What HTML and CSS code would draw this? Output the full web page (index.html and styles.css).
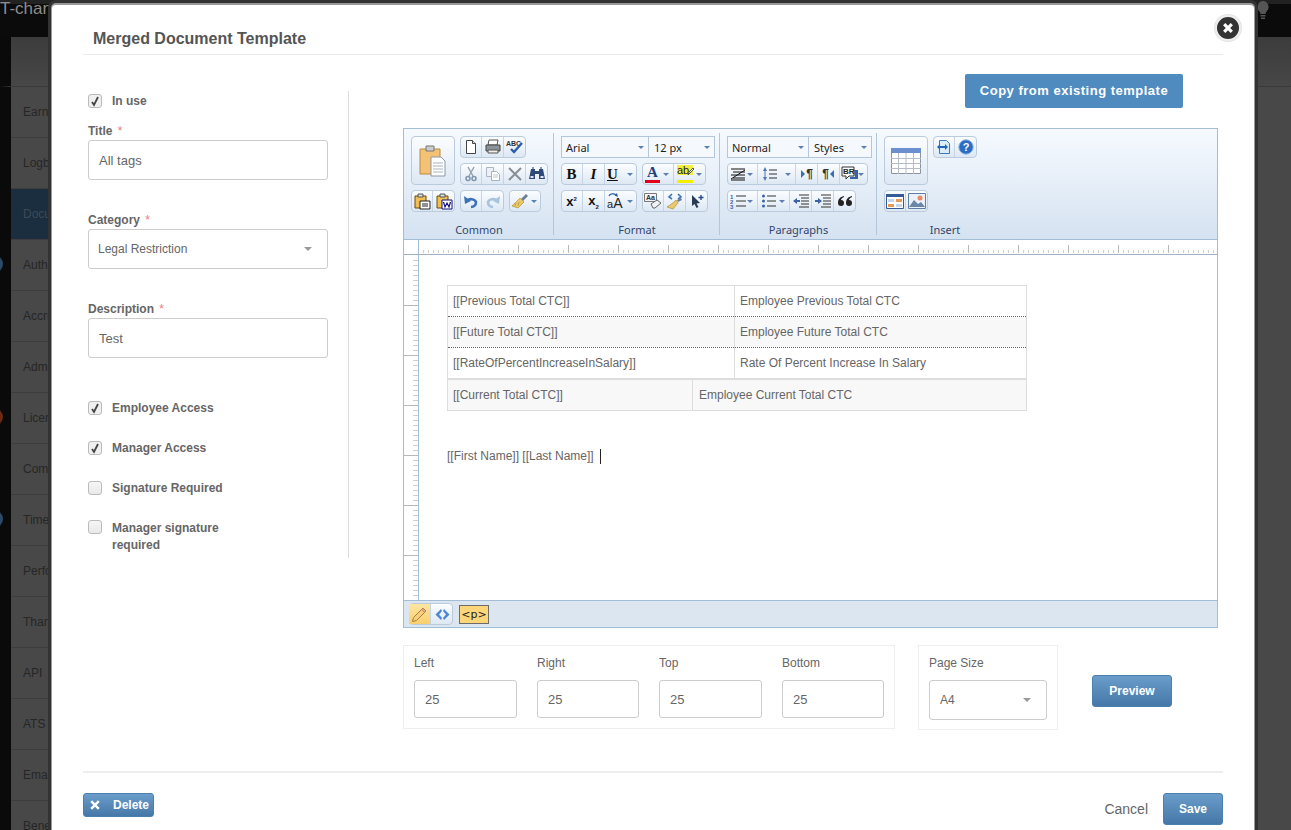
FILE: index.html
```html
<!DOCTYPE html>
<html lang="en">
<head>
<meta charset="utf-8">
<title>Merged Document Template</title>
<link rel="stylesheet" href="styles.css">
</head>
<body>
<div class="page">
  <header class="topbar">
    <span class="brand">T-change</span>
    <svg class="bulb" width="16" height="20" viewBox="0 0 16 20"><path d="M8 1a6 6 0 0 0-4 10c1 1 1.500 2 1.500 3h5c0-1 .5-2 1.500-3A6 6 0 0 0 8 1z" fill="#555"/><path d="M5.500 15h5v1.500h-5zM6 17.500h4V19H6z" fill="#555"/></svg>
  </header>
  <div class="subbar"></div>
  <nav class="sidenav">
    <div class="navitem">Earnings</div>
    <div class="navitem">Logbook</div>
    <div class="navitem active">Documents</div>
    <div class="navitem"><i class="dot blue"></i>Authorization</div>
    <div class="navitem">Accruals</div>
    <div class="navitem">Admin</div>
    <div class="navitem"><i class="dot red"></i>License</div>
    <div class="navitem">Company</div>
    <div class="navitem"><i class="dot blue"></i>Timesheet</div>
    <div class="navitem">Performance</div>
    <div class="navitem">Thanks</div>
    <div class="navitem">API</div>
    <div class="navitem">ATS</div>
    <div class="navitem">Email</div>
    <div class="navitem">Benefits</div>
  </nav>
</div>

<div class="modal">
  <div class="modal-head"><h1 class="modal-title">Merged Document Template</h1></div>
  <button class="close" aria-label="Close"><svg width="12" height="12" viewBox="0 0 12 12"><path d="M2.200 2.200l7.600 7.600M9.800 2.200l-7.600 7.600" stroke="#fff" stroke-width="3.200" stroke-linecap="butt"/></svg></button>

  <div class="modal-body">
    <aside class="left">
      <label class="check"><span class="box on"><svg width="10" height="11" viewBox="0 0 10 11"><path d="M2 6l2 3 4-8" fill="none" stroke="#444" stroke-width="1.800"/></svg></span>In use</label>

      <div class="field first"><div class="flabel">Title <b class="req">*</b></div><div class="input">All tags</div></div>
      <div class="field"><div class="flabel">Category <b class="req">*</b></div><div class="input select small">Legal Restriction<i class="caret"></i></div></div>
      <div class="field"><div class="flabel">Description <b class="req">*</b></div><div class="input">Test</div></div>

      <div class="checks">
        <label class="check"><span class="box on"><svg width="10" height="11" viewBox="0 0 10 11"><path d="M2 6l2 3 4-8" fill="none" stroke="#444" stroke-width="1.800"/></svg></span>Employee Access</label>
        <label class="check"><span class="box on"><svg width="10" height="11" viewBox="0 0 10 11"><path d="M2 6l2 3 4-8" fill="none" stroke="#444" stroke-width="1.800"/></svg></span>Manager Access</label>
        <label class="check"><span class="box"></span>Signature Required</label>
        <label class="check wrap"><span class="box"></span><span>Manager signature<br>required</span></label>
      </div>
    </aside>

    <section class="right">
      <div class="copyrow"><button class="copybtn">Copy from existing template</button></div>

      <div class="editor">
        <div class="toolbar">
          <div class="ts ts-common">
            <div class="tgrid">
              <span class="tb big"><svg width="32" height="34" viewBox="0 0 32 34"><path d="M3 5h20v25H3z" fill="#f3c274" stroke="#b98a45"/><path d="M9 2h8v5H9z" fill="#ccc" stroke="#777"/><path d="M14 13h10l4 4v15H14z" fill="#fff" stroke="#8b97a5"/><path d="M16 19h10M16 22h10M16 25h10M16 28h10" stroke="#aab4c0"/></svg></span>
              <div class="tstack">
                <div class="tg">
                  <span class="tb"><svg width="16" height="16" viewBox="0 0 16 16"><path d="M3.500 1.500h6l3 3v10h-9z" fill="#fff" stroke="#444"/><path d="M9.500 1.500v3h3" fill="#ddd" stroke="#444"/></svg></span>
                  <span class="tb"><svg width="18" height="16" viewBox="0 0 18 16"><path d="M5 1h9l-1 5H4z" fill="#fff" stroke="#555"/><path d="M2 6h14v6H2z" fill="#8d939a" stroke="#444"/><path d="M4 11h10v3H4z" fill="#eee" stroke="#555"/></svg></span>
                  <span class="tb"><svg width="18" height="16" viewBox="0 0 18 16"><text x="0" y="7" class="svgtiny">ABC</text><path d="M5 10l3 3 8-9" fill="none" stroke="#2a5fa8" stroke-width="2.400"/></svg></span>
                </div>
                <div class="tg">
                  <span class="tb"><svg width="16" height="16" viewBox="0 0 16 16"><path d="M5 1l5 9M11 1L6 10" stroke="#9aa3ad" stroke-width="1.500"/><circle cx="5" cy="12.500" r="2" fill="none" stroke="#7e93ad" stroke-width="1.500"/><circle cx="11" cy="12.500" r="2" fill="none" stroke="#7e93ad" stroke-width="1.500"/></svg></span>
                  <span class="tb"><svg width="16" height="16" viewBox="0 0 16 16"><path d="M1.500 1.500h7v9h-7z" fill="#eef2f7" stroke="#aab6c4"/><path d="M6.500 5.500h5l3 3v6h-8z" fill="#fff" stroke="#9fb2c8"/><path d="M8 9h5M8 11h5" stroke="#b9c7d8"/></svg></span>
                  <span class="tb"><svg width="16" height="16" viewBox="0 0 16 16"><path d="M2 2l12 12M14 2L2 14" stroke="#8a8f95" stroke-width="2"/></svg></span>
                  <span class="tb"><svg width="18" height="16" viewBox="0 0 18 16"><path d="M3 3h4v2h4V3h4l2 10h-6V8H7v5H1z" fill="#2f4a78"/><path d="M4 1h2v2H4zM12 1h2v2h-2z" fill="#7c9ac4"/><path d="M2.500 10h3v2h-3zM12.500 10h3v2h-3z" fill="#dfe8f4"/></svg></span>
                </div>
              </div>
              <div class="tg">
                <span class="tb"><svg width="18" height="17" viewBox="0 0 18 17"><path d="M2 3h11v12H2z" fill="#f0c052" stroke="#6b4a12"/><path d="M5 1h5v3H5z" fill="#ddd" stroke="#555"/><path d="M7 8h10v8H7z" fill="#fff" stroke="#222"/><path d="M9 11h6M9 13h6" stroke="#222"/></svg></span>
                <span class="tb"><svg width="18" height="17" viewBox="0 0 18 17"><path d="M2 3h11v12H2z" fill="#f0c052" stroke="#6b4a12"/><path d="M5 1h5v3H5z" fill="#ddd" stroke="#555"/><path d="M7 7h10v9H7z" fill="#fff" stroke="#12127a"/><path d="M8.500 9l1.500 5 2-4 2 4 1.500-5" fill="none" stroke="#12127a" stroke-width="1.200"/></svg></span>
              </div>
              <div class="trow">
                <div class="tg">
                  <span class="tb"><svg width="16" height="16" viewBox="0 0 16 16"><path d="M4 8a5 4 0 0 1 9 1c0 3-2 5-5 5" fill="none" stroke="#3e72b8" stroke-width="2.600"/><path d="M1 3l1 8 6-3z" fill="#3e72b8"/></svg></span>
                  <span class="tb"><svg width="16" height="16" viewBox="0 0 16 16"><path d="M12 8a5 4 0 0 0-9 1c0 3 2 5 5 5" fill="none" stroke="#a9c3df" stroke-width="2.600"/><path d="M15 3l-1 8-6-3z" fill="#a9c3df"/></svg></span>
                </div>
                <div class="tg">
                  <span class="tb wa"><svg width="18" height="16" viewBox="0 0 18 16"><path d="M10 6l5-5 2 2-5 5z" fill="#6a7e98"/><path d="M9 5l4 4-6 6-6-2c2-2 5-5 8-8z" fill="#ecc968" stroke="#a5852f" stroke-width=".6"/><path d="M5 10l-1 3M8 9l-1 4" stroke="#a5852f" stroke-width=".6"/></svg><i class="ar"></i></span>
                </div>
              </div>
            </div>
            <div class="tlabel">Common</div>
          </div>

          <div class="ts ts-format">
            <div class="tsels"><span class="tsel w88">Arial<i class="ar"></i></span><span class="tsel w66">12 px<i class="ar"></i></span></div>
            <div class="trow">
              <div class="tg">
                <span class="tb"><span class="fmt serif b">B</span></span>
                <span class="tb"><span class="fmt serif i">I</span></span>
                <span class="tb wa33"><span class="fmt serif u">U</span><i class="ar"></i></span>
              </div>
              <div class="tg">
                <span class="tb wa32"><span class="colA">A</span><i class="ar"></i></span>
                <span class="tb wa32"><span class="colAb">ab</span><svg class="pen" width="8" height="9" viewBox="0 0 8 9"><path d="M1 8l1-3 4-4 1 1-4 4z" fill="#fff" stroke="#555"/></svg><i class="ar"></i></span>
              </div>
            </div>
            <div class="trow">
              <div class="tg">
                <span class="tb"><span class="fmt sm">x<sup>2</sup></span></span>
                <span class="tb"><span class="fmt sm">x<sub>2</sub></span></span>
                <span class="tb wa33"><svg class="casearc" width="12" height="5" viewBox="0 0 12 5"><path d="M1 4a4 3 0 0 1 7-1" fill="none" stroke="#2a5fa8" stroke-width="1.200"/><path d="M10 5L6.500 3.500 9 1z" fill="#2a5fa8"/></svg><span class="caseA">a<b>A</b></span><i class="ar"></i></span>
              </div>
              <div class="tg">
                <span class="tb"><svg width="18" height="17" viewBox="0 0 18 17"><text x="2" y="7" class="svgtiny">Aa</text><path d="M.5 .5h12v8H.5z" fill="none" stroke="#777"/><path d="M7 11l6-4 4 3-6 5H9z" fill="#f2f2f2" stroke="#666"/></svg></span>
                <span class="tb"><svg width="18" height="17" viewBox="0 0 18 17"><path d="M6 1L3 4l3 2M12 1l3 3-3 2" fill="none" stroke="#3e72b8" stroke-width="1.600"/><path d="M11 7l4-2 1 2-4 2z" fill="#6a7e98"/><path d="M10 7l2 3-5 6-6-2c3-2 6-4 9-7z" fill="#ecc968" stroke="#a5852f" stroke-width=".6"/></svg></span>
                <span class="tb"><svg width="16" height="16" viewBox="0 0 16 16"><path d="M3 2l8 8-3.500.5L9.500 14l-2 1L5.500 11 3 13z" fill="#2a3c55"/><path d="M12 2v5M9.500 4.500h5" stroke="#2a4c88" stroke-width="1.400"/></svg></span>
              </div>
            </div>
            <div class="tlabel">Format</div>
          </div>

          <div class="ts ts-para">
            <div class="tsels"><span class="tsel w82">Normal<i class="ar"></i></span><span class="tsel w63">Styles<i class="ar"></i></span></div>
            <div class="trow">
              <div class="tg">
                <span class="tb wa31"><svg width="16" height="14" viewBox="0 0 16 14"><path d="M1 2h14M3 5h12M1 8h14M3 11h12M1 13h14" stroke="#111" stroke-width="1.200"/><path d="M1 12L15 3" stroke="#111"/></svg><i class="ar"></i></span>
                <span class="tb wa38"><svg width="16" height="16" viewBox="0 0 16 16"><path d="M3 1L1 5h4zM3 15L1 11h4zM2.500 5h1v6h-1z" fill="#4a78b8"/><path d="M7 4h8M7 8h8M7 12h8" stroke="#333"/></svg><i class="ar"></i></span>
                <span class="tb"><span class="pil"><i class="tri r"></i>¶</span></span>
                <span class="tb"><span class="pil">¶<i class="tri l"></i></span></span>
                <span class="tb wa27"><svg width="18" height="16" viewBox="0 0 18 16"><path d="M1 1h12v9H8l-3 3v-3H1z" fill="#fff" stroke="#333"/><path d="M13 4h4v9H9v-2h5z" fill="#3a62a8"/><text x="2" y="8" class="svgbr">BR</text></svg><i class="ar"></i></span>
              </div>
            </div>
            <div class="trow">
              <div class="tg">
                <span class="tb wa31"><svg width="16" height="16" viewBox="0 0 16 16"><text x="0" y="5.500" class="svgnum">1</text><text x="0" y="10.500" class="svgnum">2</text><text x="0" y="15.500" class="svgnum">3</text><path d="M6 3h10M6 8h10M6 13h10" stroke="#333"/></svg><i class="ar"></i></span>
                <span class="tb wa32b"><svg width="16" height="16" viewBox="0 0 16 16"><circle cx="2.500" cy="3" r="1.500" fill="#3a62a8"/><circle cx="2.500" cy="8" r="1.500" fill="#3a62a8"/><circle cx="2.500" cy="13" r="1.500" fill="#3a62a8"/><path d="M6 3h9M6 8h9M6 13h9" stroke="#333"/></svg><i class="ar"></i></span>
                <span class="tb"><svg width="16" height="14" viewBox="0 0 16 14"><path d="M6 1h10M8 4h8M8 7h8M8 10h8M6 13h10" stroke="#333"/><path d="M0 7l4-3v2h3v2H4v2z" fill="#3a62a8"/></svg></span>
                <span class="tb"><svg width="16" height="14" viewBox="0 0 16 14"><path d="M6 1h10M8 4h8M8 7h8M8 10h8M6 13h10" stroke="#333"/><path d="M7 7L3 4v2H0v2h3v2z" fill="#3a62a8"/></svg></span>
                <span class="tb"><svg width="16" height="12" viewBox="0 0 16 12"><path d="M7 1C3 2 1 4 1 8a3 3 0 1 0 3-3c0-1 1-2 3-3zM15 1c-4 1-6 3-6 7a3 3 0 1 0 3-3c0-1 1-2 3-3z" fill="#222"/></svg></span>
              </div>
            </div>
            <div class="tlabel">Paragraphs</div>
          </div>

          <div class="ts ts-insert">
            <div class="tgrid two">
              <span class="tb big"><svg width="30" height="26" viewBox="0 0 30 26"><path d="M.5.500h29v25H.5z" fill="#fff" stroke="#8a94a2"/><path d="M0 0h30v5H0z" fill="#6b8fcf"/><path d="M0 10.500h30M0 15.500h30M0 20.500h30M7.500 5v21M15 5v21M22.500 5v21" stroke="#b6bdc7"/></svg></span>
              <div class="tg selfstart">
                <span class="tb"><svg width="16" height="16" viewBox="0 0 16 16"><path d="M3.500 1.500h7l3 3v10h-10z" fill="#d9ecfb" stroke="#3a78c0"/><path d="M1 8l3-3v2h5v2H4v2zM12 8l-3 3V5z" fill="#1f66b8"/></svg></span>
                <span class="tb"><svg width="16" height="16" viewBox="0 0 16 16"><circle cx="8" cy="8" r="7.200" fill="#2b6cc4" stroke="#8fb4dd"/><text x="8" y="12" text-anchor="middle" class="svgq">?</text></svg></span>
              </div>
              <div class="tg">
                <span class="tb"><svg width="18" height="15" viewBox="0 0 18 15"><path d="M.5.500h17v14H.5z" fill="#fff" stroke="#365a94"/><path d="M0 0h18v3H0z" fill="#365a94"/><path d="M2 5h6v3H2z" fill="#c6d6ea"/><path d="M10 5h6v3h-6z" fill="#e69a55"/><path d="M2 10h6v3H2z" fill="#e69a55"/><path d="M10 10h6v3h-6z" fill="#c6d6ea"/></svg></span>
                <span class="tb"><svg width="18" height="16" viewBox="0 0 18 16"><path d="M.5.500h17v15H.5z" fill="#eaf1fa" stroke="#5f7ea6"/><path d="M1 14l5-7 4 4 3-2 4 5z" fill="#6c86a6"/><circle cx="12" cy="5" r="2.500" fill="#e88a5e"/></svg></span>
              </div>
            </div>
            <div class="tlabel">Insert</div>
          </div>
        </div>

        <div class="ruler-top"><span class="ruler-corner"></span><span class="ruler-h"></span></div>
        <div class="editor-main">
          <div class="ruler-v"></div>
          <div class="doc">
            <table class="dt dt1">
              <tr><td class="c1">[[Previous Total CTC]]</td><td>Employee Previous Total CTC</td></tr>
              <tr class="alt"><td class="c1">[[Future Total CTC]]</td><td>Employee Future Total CTC</td></tr>
              <tr><td class="c1">[[RateOfPercentIncreaseInSalary]]</td><td>Rate Of Percent Increase In Salary</td></tr>
            </table>
            <table class="dt dt2">
              <tr class="alt"><td class="c2">[[Current Total CTC]]</td><td>Employee Current Total CTC</td></tr>
            </table>
            <p class="docline">[[First Name]] [[Last Name]]<i class="cursor"></i></p>
          </div>
        </div>
        <div class="statusbar">
          <div class="tg">
            <span class="tb on"><svg width="17" height="17" viewBox="0 0 17 17"><path d="M1.500 15.500l1-4L12 2l3 3-9.500 9.500z" fill="#f6cf7c" stroke="#a8803a"/><path d="M12 2l3 3-1.500 1.500-3-3z" fill="#e8a1a1" stroke="#a8803a" stroke-width=".6"/></svg></span>
            <span class="tb"><svg width="17" height="13" viewBox="0 0 17 13"><path d="M7 1L1.500 6.500 7 12l1-2-3-3.500L8 3zM10 1l5.500 5.500L10 12l-1-2 3-3.500L9 3z" fill="#4a88d0"/></svg></span>
          </div>
          <span class="ptag">&lt;p&gt;</span>
        </div>
      </div>

      <div class="marginrow">
        <div class="mbox">
          <div class="mf w103"><div class="mlabel">Left</div><div class="minput">25</div></div>
          <div class="mf w102"><div class="mlabel">Right</div><div class="minput">25</div></div>
          <div class="mf w103"><div class="mlabel">Top</div><div class="minput">25</div></div>
          <div class="mf w102"><div class="mlabel">Bottom</div><div class="minput">25</div></div>
        </div>
        <div class="mbox psize">
          <div class="mf"><div class="mlabel">Page Size</div><div class="minput tall">A4<i class="caret"></i></div></div>
        </div>
        <button class="btn preview">Preview</button>
      </div>
    </section>
  </div>

  <footer class="modal-foot">
    <button class="btn del"><svg width="10" height="10" viewBox="0 0 10 10"><path d="M1.200 1.200l7.600 7.600M8.800 1.200L1.200 8.800" stroke="#fff" stroke-width="2.400"/></svg>Delete</button>
    <div class="footright"><span class="cancel">Cancel</span><button class="btn save">Save</button></div>
  </footer>
</div>
</body>
</html>
```
FILE: styles.css
```css
* { box-sizing: border-box; }
html, body { margin: 0; height: 830px; overflow: hidden; }
body { background: #484848; font-family: "Liberation Sans", Arial, sans-serif; color: #666; position: relative; }

.page { width: 1291px; height: 830px; }
.topbar { height: 37px; background: linear-gradient(#222 0 4px, #0b0b0b 4px); display: flex; justify-content: space-between; position: relative; }
.brand { font-size: 17px; color: #8d8d8d; line-height: 18px; white-space: nowrap; }
.bulb { margin: 0 20px 0 0; }
.subbar { height: 50px; border-left: 11px solid #0a0a0a; background: linear-gradient(#3c3c3c, #474747); border-bottom: 1px solid #3a3a3a; }
.sidenav { width: 110px; background: #484848; border-left: 11px solid #0a0a0a; }
.navitem { height: 51px; border-bottom: 1px solid #3d3d3d; padding-left: 12px; font-size: 12px; line-height: 50px; color: #262626; white-space: nowrap; position: relative; }
.navitem.active { background: #1b2e3f; color: #3c4a57; }
.dot { position: absolute; left: -19px; top: 15px; width: 11px; height: 18px; border-radius: 0 9px 9px 0; }
.dot.blue { background: #2c4a66; }
.dot.red { background: #6b2a12; }

.modal { position: absolute; left: 52px; top: 4px; width: 1202px; height: 830px; background: #fff; border-top: 1px solid #999; border-radius: 4px 4px 0 0; box-shadow: 0 0 0 1px #999, 0 0 0 4px #333; }
.modal-head { margin: 0 31px; height: 50px; border-bottom: 1px solid #eaeaea; }
.modal-title { margin: 0; padding: 25px 0 0 10px; font-size: 16px; line-height: 18px; font-weight: bold; color: #555; }
.close { position: absolute; right: 13px; top: 10px; width: 26px; height: 26px; padding: 0; border-radius: 50%; background: #333; border: 2px solid #eee; box-shadow: 0 0 0 1px #e4e4e4; display: flex; align-items: center; justify-content: center; }

.modal-body { display: flex; padding: 19px 36px 0; }
.left { width: 261px; height: 467px; margin-top: 17px; padding-top: 3px; border-right: 1px solid #ddd; flex: none; }
.right { width: 815px; margin-left: 54px; flex: none; }

.check { display: flex; align-items: center; height: 14px; font-size: 12px; font-weight: bold; color: #666; gap: 10px; }
.check.wrap { align-items: flex-start; height: 34px; line-height: 17px; margin-top: -1px; }
.box { width: 14px; height: 14px; flex: none; border: 1px solid #bbb; border-radius: 3px; background: linear-gradient(#f6f6f6, #e9e9e9); display: flex; align-items: center; justify-content: center; }
.box.on { background: #f0f0f0; }
.field { margin-top: 32px; width: 240px; }
.field.first { margin-top: 15px; }
.flabel { font-size: 12px; font-weight: bold; color: #666; height: 16px; line-height: 16px; margin-bottom: 1px; }
.req { color: #f07a7a; font-weight: normal; margin-left: 2px; }
.input { height: 40px; border: 1px solid #ccc; border-radius: 3px; padding-left: 10px; font-size: 13px; line-height: 40px; color: #666; background: #fff; position: relative; }
.input.small { font-size: 12px; padding-left: 9px; line-height: 38px; }
.caret { position: absolute; right: 15px; top: 50%; margin-top: -2px; border: 4px solid transparent; border-top: 4px solid #999; border-bottom: 0; }
.checks { margin-top: 43px; display: flex; flex-direction: column; gap: 26px; }

.copyrow { display: flex; justify-content: flex-end; padding-right: 35px; }
.copybtn { width: 218px; height: 34px; border: 0; border-radius: 2px; background: #4f8bbf; color: #fff; font: bold 13px "Liberation Sans", Arial, sans-serif; letter-spacing: .5px; padding: 0 0 2px; }

.editor { margin-top: 20px; height: 500px; border: 1px solid #a3bdd6; display: flex; flex-direction: column; }
.toolbar { height: 111px; background: linear-gradient(#f6faff, #d5e2f1); border-bottom: 1px solid #a3bdd6; display: flex; flex: none; font-family: "Noto Sans", "DejaVu Sans", sans-serif; }
.ts { padding: 7px 0 0 7px; position: relative; display: flex; flex-direction: column; gap: 5px; }
.ts::after { content: ""; position: absolute; right: 0; top: 4px; bottom: 4px; width: 1px; background: #b3c7db; }
.ts-common { width: 150px; }
.ts-format { width: 166px; }
.ts-para { width: 157px; }
.ts-insert { flex: 1; }
.ts-insert::after { display: none; }
.tlabel { position: absolute; left: 0; right: 0; top: 94px; text-align: center; font-size: 11px; line-height: 14px; color: #33466b; }
.ts-insert .tlabel { width: 136px; right: auto; }
.tgrid { display: grid; grid-template-columns: 44px auto; grid-template-rows: 49px 22px; gap: 5px; justify-items: start; }
.tstack { display: flex; flex-direction: column; align-items: flex-start; gap: 5px; }
.trow { display: flex; gap: 5px; height: 22px; }
.tg { display: inline-flex; height: 22px; border: 1px solid #bccbdb; border-radius: 4px; background: linear-gradient(#fbfdff, #dde8f4); }
.selfstart { align-self: start; }
.tb { width: 22px; height: 20px; display: flex; align-items: center; justify-content: center; border-right: 1px solid #c6d4e3; position: relative; flex: none; }
.tg .tb:first-child { margin-left: -1px; }
.tg .tb:last-child { border-right: 0; margin-right: -1px; }
.tb.big { width: 44px; height: 49px; border: 1px solid #bccbdb; border-radius: 4px; background: linear-gradient(#fbfdff, #dde8f4); margin: 0; }
.tb.on { background: linear-gradient(#fde6a2, #f9cf6d); }
.tb .ar, .tsel .ar { position: absolute; right: 4px; top: 50%; margin-top: -1px; border: 3px solid transparent; border-top: 3px solid #5a7fb0; border-bottom: 0; }
.wa { width: 32px; justify-content: flex-start; padding-left: 2px; }
.wa33 { width: 32px; justify-content: flex-start; padding-left: 2px; }
.wa32, .wa32b { width: 32px; justify-content: flex-start; padding-left: 3px; }
.wa31 { width: 31px; justify-content: flex-start; padding-left: 3px; }
.wa38 { width: 38px; justify-content: flex-start; padding-left: 4px; }
.wa27 { width: 28px; justify-content: flex-start; padding-left: 1px; }

.tsels { display: flex; height: 22px; }
.tsel { height: 22px; border: 1px solid #b4c6d9; background: #f5f9fd; font-size: 11px; line-height: 22px; padding-left: 4px; color: #222; position: relative; }
.tsel + .tsel { border-left: 0; padding-left: 5px; }
.w88 { width: 88px; } .w66 { width: 66px; } .w82 { width: 82px; } .w63 { width: 63px; }

.fmt { font-size: 13px; color: #111; line-height: 1; }
.serif { font-family: "Liberation Serif", serif; font-size: 15px; }
.fmt.b, .fmt.u { font-weight: bold; }
.fmt.i { font-style: italic; font-weight: bold; }
.fmt.u { text-decoration: underline; }
.fmt.sm { font: bold 13px "Liberation Sans", sans-serif; }
.fmt sup, .fmt sub { font-size: 6px; color: #223; }
.caseA { font: 11px/11px "Liberation Sans", sans-serif; color: #222; margin-top: 5px; }
.caseA b { font-size: 14px; font-weight: normal; }
.casearc { position: absolute; left: 3px; top: 1px; }
.colA { font: bold 15px/15px "Liberation Serif", serif; color: #1f3f7a; border-bottom: 3px solid #e0001b; padding: 0 2px; height: 18px; }
.colAb { font: 11px/11px "Liberation Sans", sans-serif; color: #222; background: linear-gradient(#f4ef3c 0 10px, transparent 10px); border-bottom: 3px solid #f4ef00; width: 16px; height: 18px; }
.pen { position: absolute; left: 13px; top: 3px; }
.pil { font: bold 12px "Liberation Sans", sans-serif; color: #333; display: flex; align-items: center; }
.tri { width: 0; height: 0; border: 4px solid transparent; margin: 0 1px; }
.tri.r { border-left: 4px solid #3a6fb8; border-right: 0; }
.tri.l { border-right: 4px solid #3a6fb8; border-left: 0; }
.svgtiny { font: bold 7px "Liberation Sans", sans-serif; fill: #333; }
.svgbr { font: bold 8px "Liberation Sans", sans-serif; fill: #222; }
.svgnum { font: bold 6px "Liberation Sans", sans-serif; fill: #3a62a8; }
.svgq { font: bold 11px "Liberation Sans", sans-serif; fill: #fff; }

.ruler-top { height: 15px; display: flex; flex: none; border-bottom: 1px solid #9fb2c4; background: #fff; }
.ruler-corner { width: 15px; border-right: 1px solid #a3bdd6; flex: none; }
.ruler-h { flex: 1; background:
  repeating-linear-gradient(90deg, #b8b8b8 0 1px, transparent 1px 50px) 49px 5px / 100% 8px no-repeat,
  repeating-linear-gradient(90deg, #cfcfcf 0 1px, transparent 1px 5px) 4px 10px / 100% 3px no-repeat; }
.editor-main { flex: 1; display: flex; min-height: 0; }
.ruler-v { width: 15px; flex: none; border-right: 1px solid #a3bdd6; background:
  repeating-linear-gradient(180deg, #b8b8b8 0 1px, transparent 1px 50px) 0 50px / 100% 100% no-repeat,
  repeating-linear-gradient(180deg, #cfcfcf 0 1px, transparent 1px 5px) 9px 5px / 5px 100% no-repeat; }
.doc { flex: 1; padding: 30px 0 0 28px; font-size: 12px; color: #666; background: #fff; }
.dt { border-collapse: collapse; width: 580px; table-layout: fixed; font-size: 12px; color: #666; }
.dt td { height: 31px; padding: 0 0 0 5px; border: 1px solid #ddd; border-top: 1px dotted #666; border-bottom: 1px dotted #666; white-space: nowrap; }
.dt1 tr:first-child td { border-top: 1px solid #ddd; }
.dt1 tr:last-child td { border-bottom: 2px solid #ddd; }
.dt2 td { height: 31px; border-top: 0; border-bottom: 1px solid #ddd; }
.dt2 td + td { padding-left: 6px; }
.alt td { background: #f8f8f8; }
.c1 { width: 287px; }
.c2 { width: 245px; }
.docline { margin: 38px 0 0; line-height: 15px; height: 15px; display: flex; color: #666; }
.cursor { width: 1px; height: 15px; background: #222; margin-left: 6px; }

.statusbar { height: 27px; flex: none; background: #dce6f1; border-top: 1px solid #a3bdd6; display: flex; align-items: center; padding-left: 5px; gap: 6px; }
.ptag { width: 30px; height: 19px; border: 1px solid #6b6b6b; background: #fdd67a; font: 11px/17px "DejaVu Sans", sans-serif; color: #222; text-align: center; }

.marginrow { display: flex; align-items: flex-start; margin-top: 17px; }
.mbox { display: flex; gap: 20px; padding: 9px 10px 10px; border: 1px solid #eee; width: 492px; height: 84px; }
.psize { width: 140px; height: 85px; margin-left: 23px; }
.psize .mf { width: 118px; }
.w103 { width: 103px; } .w102 { width: 102px; }
.mlabel { font-size: 12px; line-height: 17px; color: #666; margin-bottom: 8px; }
.minput { height: 38px; border: 1px solid #ccc; border-radius: 3px; font-size: 13px; line-height: 38px; padding-left: 10px; color: #666; position: relative; }
.minput.tall { height: 40px; line-height: 38px; font-size: 12px; }
.btn { border: 1px solid #4a7fae; border-radius: 3px; background: linear-gradient(#6a9dca, #4577a8); color: #fff; font: bold 12px "Liberation Sans", Arial, sans-serif; padding: 0; }
.preview { width: 80px; height: 32px; margin: 30px 0 0 34px; }

.modal-foot { margin: 41px 31px 0; padding-top: 20px; border-top: 2px solid #eee; display: flex; justify-content: space-between; align-items: flex-start; }
.del { width: 71px; height: 24px; display: flex; align-items: center; padding-left: 6px; gap: 13px; }
.footright { display: flex; align-items: center; gap: 15px; }
.cancel { font-size: 14px; color: #666; line-height: 32px; }
.save { width: 60px; height: 32px; }
```
